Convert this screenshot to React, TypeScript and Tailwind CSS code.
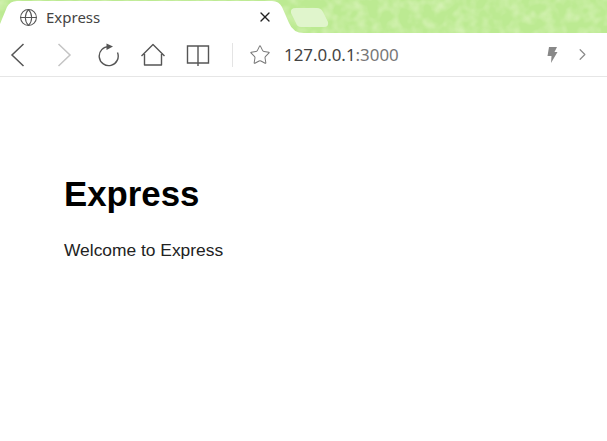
import { Globe, X, ChevronRight, Star } from "lucide-react"

function TabStrip() {
  return (
    <div className="relative flex h-[33px] bg-[#bcea92]">
      <svg className="absolute left-0 top-0" width="607" height="33" viewBox="0 0 607 33">
        {/* wallpaper mottling behind the tabs */}
        <filter id="mottle">
          <feTurbulence type="fractalNoise" baseFrequency="0.09" numOctaves="2" seed="4" />
          <feColorMatrix values="0 0 0 0 1  0 0 0 0 1  0 0 0 0 0.85  1.6 0 0 0 -0.62" />
        </filter>
        <rect width="607" height="33" filter="url(#mottle)" opacity="0.45" />
        <path d="M0 24 L7 7 Q10 1 17 1 L272 1 Q279 1 282 7 L289 23 Q293 33 304 33 L0 33 Z" fill="#fff" />
        <path d="M291 13 Q290 8 296 8 L317 8 Q321 8 323 12 L328 22 Q329 27 324 27 L301 27 Q297 27 296 23 Z" fill="#e0f5cc" />
      </svg>
      <div className="relative flex h-full w-[279px] items-center pl-[19px] pt-[1px]">
        <Globe size={19} strokeWidth={1.3} className="text-[#555]" />
        <span className="ml-[8px] text-[15px] text-[#444] [font-family:'Noto_Sans',sans-serif]">Express</span>
        <X size={16} strokeWidth={2} className="ml-auto mr-[6px] text-[#222]" />
      </div>
    </div>
  )
}

function Toolbar() {
  return (
    <div className="flex h-[44px] items-center border-b border-[#e6e6e6] bg-white">
      <svg className="ml-[10px]" width="15" height="24" viewBox="0 0 15 24" fill="none" stroke="#555" strokeWidth="1.5">
        <path d="M13.5 1 L2 12 L13.5 23" />
      </svg>
      <svg className="ml-[32px]" width="15" height="24" viewBox="0 0 15 24" fill="none" stroke="#c4c4c4" strokeWidth="1.5">
        <path d="M1.5 1 L13 12 L1.5 23" />
      </svg>
      <svg className="ml-[24px]" width="24" height="24" viewBox="0 0 24 24" fill="none" stroke="#555" strokeWidth="1.4">
        <path d="M13 3.6 A9.5 9.5 0 1 0 21.5 9.5" />
        <path d="M10.5 0.5 L17 3.5 L10.5 7 Z" fill="#555" stroke="none" />
      </svg>
      <svg className="ml-[20px]" width="26" height="24" viewBox="0 0 26 24" fill="none" stroke="#555" strokeWidth="1.4">
        <path d="M1.5 13 L13 1.5 L24.5 13 M4.5 11 V22 H21.5 V11" strokeLinejoin="round" />
      </svg>
      <svg className="ml-[20px]" width="24" height="24" viewBox="0 0 24 24" fill="none" stroke="#555" strokeWidth="1.4">
        <path d="M1.5 3 H12 V20 H1.5 Z M12 3 H22.5 V20 H12 M12 20 V23" />
      </svg>
      <div className="ml-[22px] h-[24px] w-px bg-[#e4e4e4]" />
      <Star size={22} strokeWidth={1.1} className="ml-[16px] text-[#777]" />
      <span className="ml-[13px] text-[16.9px] text-[#444] [font-family:'Noto_Sans',sans-serif]">
        127.0.0.1<span className="text-[#777]">:3000</span>
      </span>
      <svg className="ml-auto" width="14" height="18" viewBox="0 0 14 18" fill="#888">
        <path d="M4 1 H12 L9.5 6 H12.5 L6 17 L6.5 10 H2.5 Z" />
      </svg>
      <ChevronRight size={19} strokeWidth={1.5} className="ml-[14px] mr-[15px] text-[#8a8a8a]" />
    </div>
  )
}

export default function App() {
  return (
    <div className="h-[441px] w-[607px] overflow-hidden bg-white [font-family:'Liberation_Sans',sans-serif]">
      <TabStrip />
      <Toolbar />
      <div className="px-[64px] pt-[97px]">
        <h1 className="text-[34.8px] font-bold leading-[40px] text-black">Express</h1>
        <p className="mt-[26px] text-[17.4px] leading-[20px] text-[#222]">Welcome to Express</p>
      </div>
    </div>
  )
}
